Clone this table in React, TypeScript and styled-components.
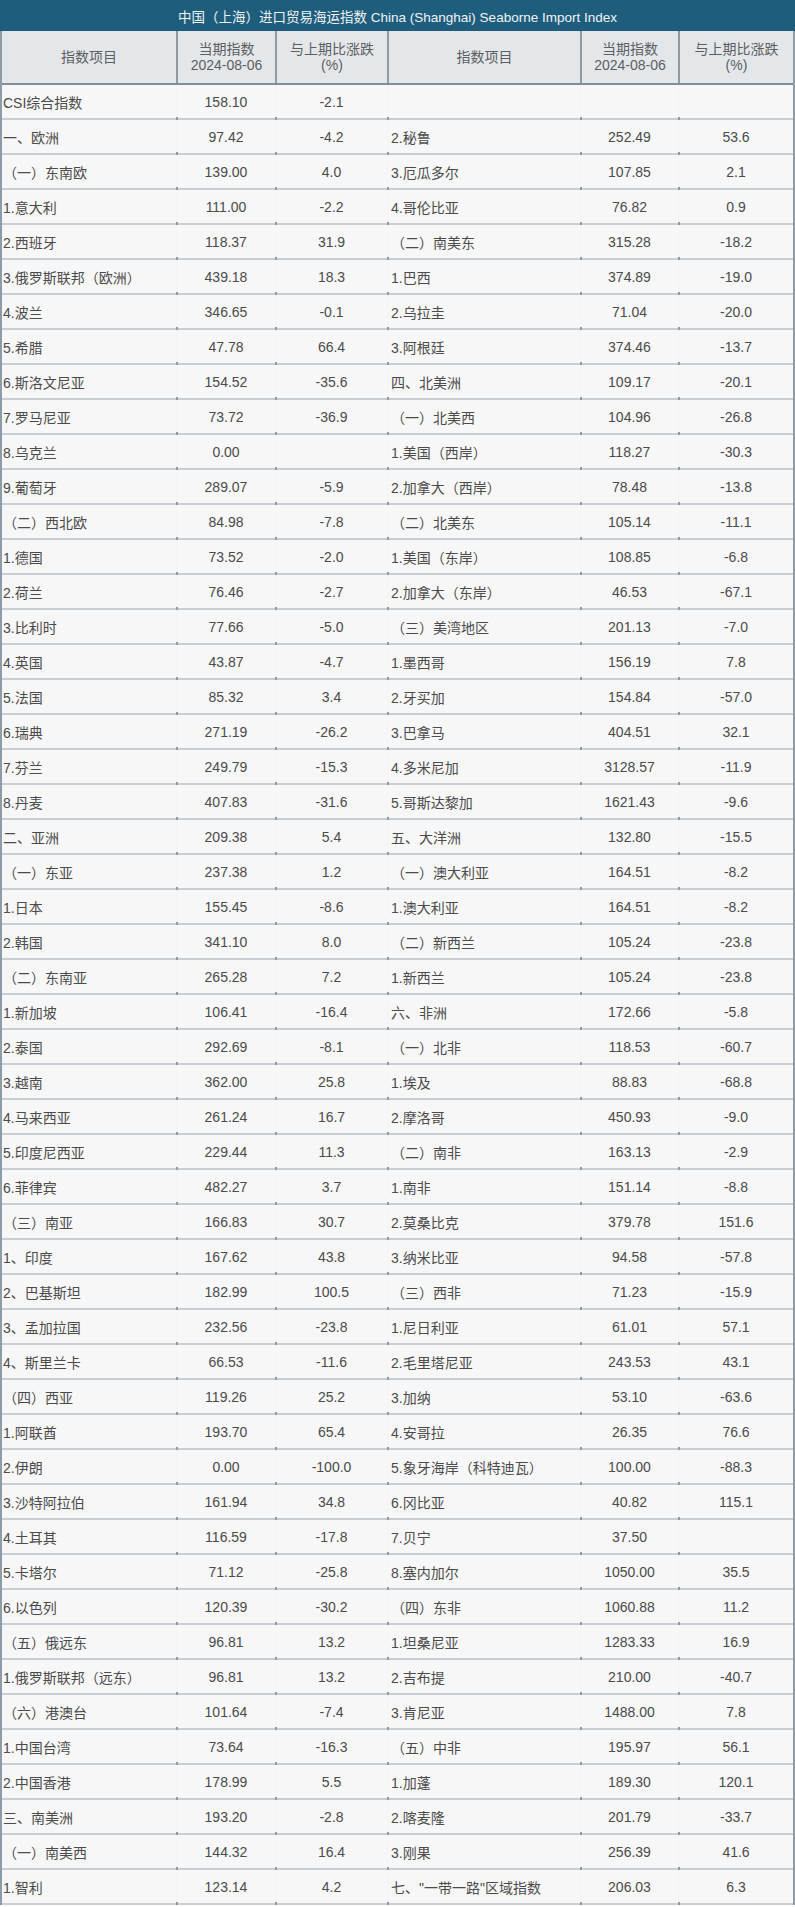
import React from "react";
import styled, { createGlobalStyle } from "styled-components";

const Global = createGlobalStyle`
  html, body { margin: 0; padding: 0; background: #ffffff; }
  body { font-family: "Liberation Sans", "Noto Sans CJK SC", sans-serif; }
`;

const COLS = "174px 99px 112px 193px 98px 115px";

const Table = styled.div`
  width: 795px;
  box-sizing: border-box;
  border-left: 2px solid #8d9ca7;
  border-right: 2px solid #8d9ca7;
  background: #f7f7f7;
`;

const TitleBar = styled.div`
  height: 31px;
  margin: 0 -2px;
  background: #1f5d7d;
  color: #eef3f6;
  font-size: 13.5px;
  display: flex;
  align-items: center;
  justify-content: center;
`;

const HeadRow = styled.div`
  display: grid;
  grid-template-columns: ${COLS};
  height: 54px;
  box-sizing: border-box;
  background: #e4e7ea;
  border-bottom: 2px solid #7f909c;
`;

const HeadCell = styled.div<{ $first?: boolean }>`
  display: flex;
  flex-direction: column;
  align-items: center;
  justify-content: center;
  text-align: center;
  color: #5b5e61;
  font-size: 14px;
  line-height: 16px;
  border-left: ${(p) => (p.$first ? "none" : "2px solid #8f9ba4")};
`;

const Row = styled.div`
  display: grid;
  grid-template-columns: ${COLS};
  height: 35px;
  box-sizing: border-box;
  border-bottom: 2px solid #c8ced3;
  background: #f7f7f7;
`;

const Cell = styled.div<{ $first?: boolean }>`
  position: relative;
  display: flex;
  align-items: center;
  color: #4b4b4b;
  font-size: 14px;
  white-space: nowrap;
  border-left: ${(p) => (p.$first ? "none" : "1px solid #f4f4f4")};
  &::after {
    content: "";
    display: ${(p) => (p.$first ? "none" : "block")};
    position: absolute;
    left: -1px;
    bottom: -2px;
    width: 2px;
    height: 3px;
    background: #8f9aa3;
  }
`;

const NameCell = styled(Cell)`
  padding-left: ${(p) => (p.$first ? "1px" : "3px")};
`;

const NumCell = styled(Cell)`
  justify-content: center;
`;

type Item = [string, string, string];

const left: Item[] = [
  ["CSI综合指数", "158.10", "-2.1"],
  ["一、欧洲", "97.42", "-4.2"],
  ["（一）东南欧", "139.00", "4.0"],
  ["1.意大利", "111.00", "-2.2"],
  ["2.西班牙", "118.37", "31.9"],
  ["3.俄罗斯联邦（欧洲）", "439.18", "18.3"],
  ["4.波兰", "346.65", "-0.1"],
  ["5.希腊", "47.78", "66.4"],
  ["6.斯洛文尼亚", "154.52", "-35.6"],
  ["7.罗马尼亚", "73.72", "-36.9"],
  ["8.乌克兰", "0.00", ""],
  ["9.葡萄牙", "289.07", "-5.9"],
  ["（二）西北欧", "84.98", "-7.8"],
  ["1.德国", "73.52", "-2.0"],
  ["2.荷兰", "76.46", "-2.7"],
  ["3.比利时", "77.66", "-5.0"],
  ["4.英国", "43.87", "-4.7"],
  ["5.法国", "85.32", "3.4"],
  ["6.瑞典", "271.19", "-26.2"],
  ["7.芬兰", "249.79", "-15.3"],
  ["8.丹麦", "407.83", "-31.6"],
  ["二、亚洲", "209.38", "5.4"],
  ["（一）东亚", "237.38", "1.2"],
  ["1.日本", "155.45", "-8.6"],
  ["2.韩国", "341.10", "8.0"],
  ["（二）东南亚", "265.28", "7.2"],
  ["1.新加坡", "106.41", "-16.4"],
  ["2.泰国", "292.69", "-8.1"],
  ["3.越南", "362.00", "25.8"],
  ["4.马来西亚", "261.24", "16.7"],
  ["5.印度尼西亚", "229.44", "11.3"],
  ["6.菲律宾", "482.27", "3.7"],
  ["（三）南亚", "166.83", "30.7"],
  ["1、印度", "167.62", "43.8"],
  ["2、巴基斯坦", "182.99", "100.5"],
  ["3、孟加拉国", "232.56", "-23.8"],
  ["4、斯里兰卡", "66.53", "-11.6"],
  ["（四）西亚", "119.26", "25.2"],
  ["1.阿联酋", "193.70", "65.4"],
  ["2.伊朗", "0.00", "-100.0"],
  ["3.沙特阿拉伯", "161.94", "34.8"],
  ["4.土耳其", "116.59", "-17.8"],
  ["5.卡塔尔", "71.12", "-25.8"],
  ["6.以色列", "120.39", "-30.2"],
  ["（五）俄远东", "96.81", "13.2"],
  ["1.俄罗斯联邦（远东）", "96.81", "13.2"],
  ["（六）港澳台", "101.64", "-7.4"],
  ["1.中国台湾", "73.64", "-16.3"],
  ["2.中国香港", "178.99", "5.5"],
  ["三、南美洲", "193.20", "-2.8"],
  ["（一）南美西", "144.32", "16.4"],
  ["1.智利", "123.14", "4.2"],
];

const right: Item[] = [
  ["", "", ""],
  ["2.秘鲁", "252.49", "53.6"],
  ["3.厄瓜多尔", "107.85", "2.1"],
  ["4.哥伦比亚", "76.82", "0.9"],
  ["（二）南美东", "315.28", "-18.2"],
  ["1.巴西", "374.89", "-19.0"],
  ["2.乌拉圭", "71.04", "-20.0"],
  ["3.阿根廷", "374.46", "-13.7"],
  ["四、北美洲", "109.17", "-20.1"],
  ["（一）北美西", "104.96", "-26.8"],
  ["1.美国（西岸）", "118.27", "-30.3"],
  ["2.加拿大（西岸）", "78.48", "-13.8"],
  ["（二）北美东", "105.14", "-11.1"],
  ["1.美国（东岸）", "108.85", "-6.8"],
  ["2.加拿大（东岸）", "46.53", "-67.1"],
  ["（三）美湾地区", "201.13", "-7.0"],
  ["1.墨西哥", "156.19", "7.8"],
  ["2.牙买加", "154.84", "-57.0"],
  ["3.巴拿马", "404.51", "32.1"],
  ["4.多米尼加", "3128.57", "-11.9"],
  ["5.哥斯达黎加", "1621.43", "-9.6"],
  ["五、大洋洲", "132.80", "-15.5"],
  ["（一）澳大利亚", "164.51", "-8.2"],
  ["1.澳大利亚", "164.51", "-8.2"],
  ["（二）新西兰", "105.24", "-23.8"],
  ["1.新西兰", "105.24", "-23.8"],
  ["六、非洲", "172.66", "-5.8"],
  ["（一）北非", "118.53", "-60.7"],
  ["1.埃及", "88.83", "-68.8"],
  ["2.摩洛哥", "450.93", "-9.0"],
  ["（二）南非", "163.13", "-2.9"],
  ["1.南非", "151.14", "-8.8"],
  ["2.莫桑比克", "379.78", "151.6"],
  ["3.纳米比亚", "94.58", "-57.8"],
  ["（三）西非", "71.23", "-15.9"],
  ["1.尼日利亚", "61.01", "57.1"],
  ["2.毛里塔尼亚", "243.53", "43.1"],
  ["3.加纳", "53.10", "-63.6"],
  ["4.安哥拉", "26.35", "76.6"],
  ["5.象牙海岸（科特迪瓦）", "100.00", "-88.3"],
  ["6.冈比亚", "40.82", "115.1"],
  ["7.贝宁", "37.50", ""],
  ["8.塞内加尔", "1050.00", "35.5"],
  ["（四）东非", "1060.88", "11.2"],
  ["1.坦桑尼亚", "1283.33", "16.9"],
  ["2.吉布提", "210.00", "-40.7"],
  ["3.肯尼亚", "1488.00", "7.8"],
  ["（五）中非", "195.97", "56.1"],
  ["1.加蓬", "189.30", "120.1"],
  ["2.喀麦隆", "201.79", "-33.7"],
  ["3.刚果", "256.39", "41.6"],
  ['七、"一带一路"区域指数', "206.03", "6.3"],
];

const HeadGroup = ({ first }: { first?: boolean }) => (
  <>
    <HeadCell $first={first}>指数项目</HeadCell>
    <HeadCell>
      <span>当期指数</span>
      <span>2024-08-06</span>
    </HeadCell>
    <HeadCell>
      <span>与上期比涨跌</span>
      <span>(%)</span>
    </HeadCell>
  </>
);

export default function App() {
  return (
    <>
      <Global />
      <Table>
        <TitleBar>中国（上海）进口贸易海运指数 China (Shanghai) Seaborne Import Index</TitleBar>
        <HeadRow>
          <HeadGroup first />
          <HeadGroup />
        </HeadRow>
        {left.map((l, i) => {
          const r = right[i];
          return (
            <Row key={i}>
              <NameCell $first>{l[0]}</NameCell>
              <NumCell>{l[1]}</NumCell>
              <NumCell>{l[2]}</NumCell>
              <NameCell>{r[0]}</NameCell>
              <NumCell>{r[1]}</NumCell>
              <NumCell>{r[2]}</NumCell>
            </Row>
          );
        })}
      </Table>
    </>
  );
}
